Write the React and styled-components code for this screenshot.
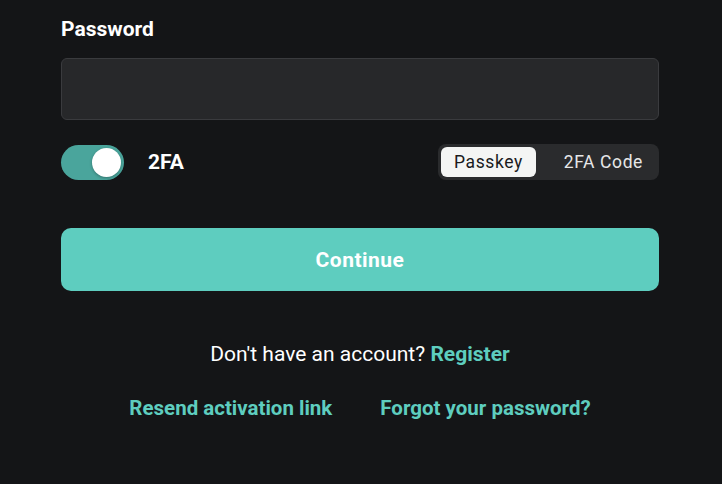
import React, { useState } from 'react';
import styled, { createGlobalStyle } from 'styled-components';

const GlobalStyle = createGlobalStyle`
  html, body {
    margin: 0;
    padding: 0;
    background: #141517;
  }
  body {
    font-family: Roboto, "Noto Sans", sans-serif;
    color: #ffffff;
  }
`;

const App = () => {
  const [mode, setMode] = useState('passkey');
  const [enabled, setEnabled] = useState(true);

  return (
    <>
      <GlobalStyle />
      <Form>
        <Label htmlFor="password">Password</Label>
        <Input id="password" type="password" />

        <OptionsRow>
          <ToggleGroup>
            <Toggle $on={enabled} onClick={() => setEnabled(!enabled)} aria-label="2FA">
              <Knob $on={enabled} />
            </Toggle>
            <ToggleLabel>2FA</ToggleLabel>
          </ToggleGroup>
          <Segmented>
            <Segment $active={mode === 'passkey'} onClick={() => setMode('passkey')}>Passkey</Segment>
            <Segment $active={mode === 'code'} onClick={() => setMode('code')}>2FA Code</Segment>
          </Segmented>
        </OptionsRow>

        <SubmitButton type="button">Continue</SubmitButton>

        <RegisterLine>
          Don't have an account? <TextLink href="#">Register</TextLink>
        </RegisterLine>

        <LinksRow>
          <TextLink href="#">Resend activation link</TextLink>
          <TextLink href="#">Forgot your password?</TextLink>
        </LinksRow>
      </Form>
    </>
  );
};

export default App;

// Styled Components
const Form = styled.div`
  display: flex;
  flex-direction: column;
  padding: 15px 63px 0 61px;
`;

const Label = styled.label`
  font-size: 21px;
  font-weight: 700;
  line-height: 28px;
  margin-bottom: 15px;
`;

const Input = styled.input`
  box-sizing: border-box;
  height: 62px;
  width: 100%;
  background: #27282a;
  border: 1px solid #3a3b3e;
  border-radius: 6px;
  color: #fff;
  font-size: 16px;
  padding: 0 16px;
  outline: none;
`;

const OptionsRow = styled.div`
  display: flex;
  align-items: center;
  justify-content: space-between;
  margin-top: 24px;
`;

const ToggleGroup = styled.div`
  display: flex;
  align-items: center;
  gap: 24px;
`;

const Toggle = styled.button`
  position: relative;
  width: 63px;
  height: 35px;
  border: none;
  border-radius: 18px;
  padding: 0;
  cursor: pointer;
  background: ${({ $on }) => ($on ? '#4aa59c' : '#3a3b3e')};
`;

const Knob = styled.span`
  position: absolute;
  top: 3px;
  left: ${({ $on }) => ($on ? '31px' : '3px')};
  width: 29px;
  height: 29px;
  border-radius: 50%;
  background: #ffffff;
  box-shadow: 0 1px 3px rgba(0, 0, 0, 0.3);
`;

const ToggleLabel = styled.span`
  font-size: 21px;
  font-weight: 700;
`;

const Segmented = styled.div`
  display: flex;
  align-items: center;
  height: 36px;
  box-sizing: border-box;
  padding: 3px;
  background: #2a2b2d;
  border-radius: 8px;
`;

const Segment = styled.button`
  height: 30px;
  border: none;
  border-radius: 6px;
  padding: 0 13px;
  font-family: Roboto, "Noto Sans", sans-serif;
  font-size: 17.5px;
  letter-spacing: 0.6px;
  cursor: pointer;
  background: ${({ $active }) => ($active ? '#f4f5f4' : 'transparent')};
  color: ${({ $active }) => ($active ? '#1a1b1d' : '#e6e7e8')};
  & + & {
    padding: 0 13px 0 28px;
  }
`;

const SubmitButton = styled.button`
  margin-top: 48px;
  height: 63px;
  width: 100%;
  border: none;
  border-radius: 10px;
  background: #5ecdbf;
  color: #ffffff;
  font-family: Roboto, "Noto Sans", sans-serif;
  font-size: 21px;
  font-weight: 700;
  letter-spacing: 0.5px;
  cursor: pointer;
`;

const RegisterLine = styled.p`
  margin: 49px 0 0;
  text-align: center;
  font-size: 21px;
  line-height: 28px;
`;

const LinksRow = styled.div`
  display: flex;
  justify-content: center;
  gap: 48px;
  margin-top: 26px;
  font-size: 20.5px;
  line-height: 28px;
`;

const TextLink = styled.a`
  color: #5ecdbf;
  font-weight: 700;
  text-decoration: none;
`;
